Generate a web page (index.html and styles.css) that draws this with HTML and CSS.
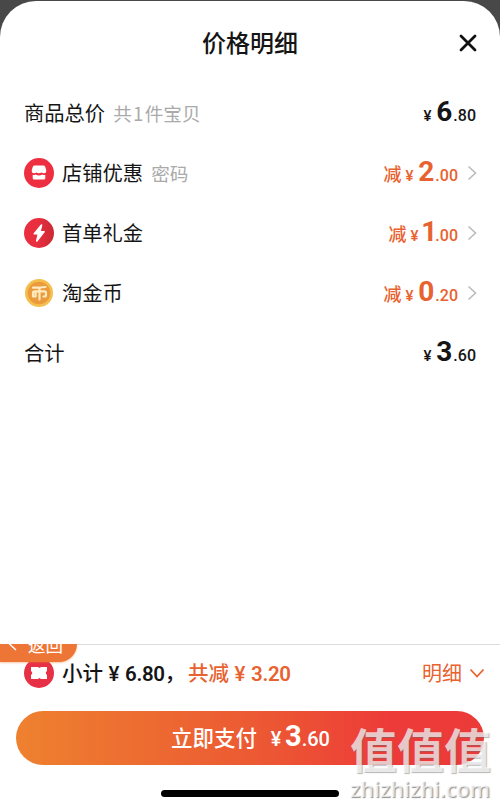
FILE: index.html
```html
<!DOCTYPE html>
<html lang="zh-CN">
  <head>
    <meta charset="UTF-8">
    <title>价格明细</title>
    <link rel="stylesheet" href="styles.css">
  </head>
  <body>
    <div class="sheet">
      <header class="header">
        <h1 class="title">价格明细</h1>
        <svg class="close" viewBox="0 0 18 18"><path d="M2 2l14 14M16 2L2 16"/></svg>
      </header>

      <main class="list">
        <div class="row">
          <span class="label">商品总价</span>
          <span class="note">共<span class="count">1</span>件宝贝</span>
          <span class="price"><span class="yen">¥</span><b>6</b><span class="dec">.80</span></span>
        </div>

        <div class="row">
          <svg class="icon" viewBox="0 0 30 30">
            <circle cx="15" cy="15" r="15" fill="#ee2f41"/>
            <path d="M10.500 7.500h9q1.200 0 1.700 1.200l1 3.300q.400 3.200-2.200 3.200-1.200 0-2.500-.700-1.300.800-2.500.800t-2.500-.800q-1.300.700-2.500.700-2.600 0-2.200-3.200l1-3.300q.500-1.200 1.700-1.200z" fill="#fff"/>
            <path d="M8.700 17q1.500.400 3-.500 1.700 1 3.300 1t3.300-1q1.500.900 3 .500v3q0 1.600-1.500 1.600h-9.600q-1.500 0-1.500-1.600z" fill="#fff"/>
          </svg>
          <span class="label">店铺优惠</span>
          <span class="note">密码</span>
          <span class="price off"><span class="cut">减</span><span class="yen">¥</span><b>2</b><span class="dec">.00</span></span>
          <svg class="arrow" viewBox="0 0 10 16"><path d="M1.500 1.500L8.500 8l-7 6.500"/></svg>
        </div>

        <div class="row">
          <svg class="icon" viewBox="0 0 30 30">
            <defs>
              <linearGradient id="red" x1="0" y1="0" x2="1" y2="0">
                <stop offset="0.450" stop-color="#e92e40"/>
                <stop offset="1" stop-color="#c92a34"/>
              </linearGradient>
            </defs>
            <circle cx="15" cy="15" r="15" fill="url(#red)"/>
            <path d="M17.500 7L10.300 15.800h4L12.800 23 20 13.700h-4z" fill="#fff" stroke="#fff" stroke-width="1.600" stroke-linejoin="round"/>
          </svg>
          <span class="label">首单礼金</span>
          <span class="price off"><span class="cut">减</span><span class="yen">¥</span><b class="one">1</b><span class="dec">.00</span></span>
          <svg class="arrow" viewBox="0 0 10 16"><path d="M1.500 1.500L8.500 8l-7 6.500"/></svg>
        </div>

        <div class="row">
          <svg class="icon" viewBox="0 0 30 30">
            <circle cx="15" cy="15" r="14" fill="#f3bf4f"/>
            <circle cx="15" cy="15" r="11.300" fill="#eb9b3b"/>
            <path d="M9 9.700q6.500.100 12.500-.700M15.500 9.500V21.500M10.800 18.500H9V15q0-1.700 1.700-1.700h9.600q1.700 0 1.700 1.700v2q0 1.500-1.500 1.500h-1M11.600 13.300v5.200" fill="none" stroke="#fdeac0" stroke-width="2.200" stroke-linejoin="round" stroke-linecap="round"/>
          </svg>
          <span class="label">淘金币</span>
          <span class="price off"><span class="cut">减</span><span class="yen">¥</span><b>0</b><span class="dec">.20</span></span>
          <svg class="arrow" viewBox="0 0 10 16"><path d="M1.500 1.500L8.500 8l-7 6.500"/></svg>
        </div>

        <div class="row">
          <span class="label">合计</span>
          <span class="price"><span class="yen">¥</span><b>3</b><span class="dec">.60</span></span>
        </div>
      </main>

      <footer class="footer">
        <div class="back">
          <svg class="back-arrow" viewBox="0 0 9 14"><path d="M8 1L1.500 7 8 13"/></svg>
          <span>返回</span>
        </div>

        <div class="summary">
          <svg class="icon" viewBox="0 0 30 30">
            <circle cx="15" cy="15" r="15" fill="#e72f45"/>
            <path d="M7 9h7l1.500 1L17 9h6v4q-2.500 2 0 4v4h-6l-1.500-1L14 21H7v-4q2.500-2 0-4z" fill="#fff"/>
          </svg>
          <span class="subtotal">小计<span class="sum-yen">¥</span><span class="num">6.80</span>，</span>
          <span class="saved">共减<span class="sum-yen">¥</span><span class="num">3.20</span></span>
          <span class="detail">明细</span>
          <svg class="down" viewBox="0 0 16 10"><path d="M1.500 1.500L8 8.500l6.500-7"/></svg>
        </div>

        <button type="button" class="pay"><span>立即支付</span><span class="pay-yen">¥</span><b>3</b><span class="pay-dec">.60</span></button>
        <div class="home-bar"></div>
      </footer>
    </div>

    <div class="watermark">
      <div class="mark-name">值值值</div>
      <div class="mark-url">zhizhizhi.com</div>
    </div>
  </body>
</html>
```
FILE: styles.css
```css
* {
  box-sizing: border-box;
}

body {
  margin: 0;
  padding-top: 1px;
  height: 807px;
  overflow: hidden;
  position: relative;
  background: #484848;
  color: #151515;
  font-family: "Noto Sans CJK SC", sans-serif;
}

.sheet {
  display: flex;
  flex-direction: column;
  height: 806px;
  background: #fff;
  border-radius: 36px 36px 0 0;
}

.header {
  display: grid;
  grid-template-columns: 1fr auto 1fr;
  align-items: center;
  height: 82px;
  padding: 0 23px;
}

.title {
  grid-column: 2;
  margin: 0;
  font-size: 24px;
  font-weight: 500;
  line-height: 36px;
}

.close {
  width: 18px;
  height: 18px;
  justify-self: end;
  margin-top: 2px;
  fill: none;
  stroke: #111;
  stroke-width: 2.8;
  stroke-linecap: round;
}

.list {
  flex: 1;
  padding: 0 24px;
}

.row {
  display: flex;
  align-items: center;
  height: 60px;
}

.icon {
  flex: none;
  width: 30px;
  height: 30px;
  margin-right: 8px;
}

.label {
  padding-bottom: 2px;
  font-size: 20.3px;
}

.note {
  margin-left: 8px;
  padding-bottom: 2px;
  font-size: 18.6px;
  font-weight: 400;
  color: #aaa;
}

.count {
  display: inline-block;
  width: 13px;
  text-align: center;
}

.price {
  display: flex;
  align-items: baseline;
  margin-left: auto;
  padding-top: 2px;
  font-family: Roboto, "Noto Sans CJK SC", sans-serif;
  line-height: 32px;
}

.price b {
  width: 17px;
  font-size: 28px;
  font-weight: 700;
}

.yen {
  margin-right: 5px;
  font-size: 15px;
  font-weight: 500;
}

.dec {
  font-size: 16px;
  font-weight: 500;
}

.off {
  color: #e8622f;
}

.cut {
  margin-right: 4px;
  font-size: 18px;
  font-weight: 500;
}

.price .one {
  width: 12px;
  text-indent: -2px;
}

.arrow {
  width: 10px;
  height: 16px;
  margin-left: 9px;
  margin-right: -1px;
  fill: none;
  stroke: #bbb;
  stroke-width: 1.6;
}

.footer {
  position: relative;
  height: 163px;
  border-top: 1px solid #dcdcdc;
}

/* floating tab, cut off by the top of the footer */
.back {
  position: absolute;
  top: -1px;
  left: 0;
  display: flex;
  align-items: flex-start;
  width: 77px;
  height: 18px;
  overflow: hidden;
  background: #ed7535;
  border-radius: 0 0 18px 0;
  box-shadow: 0 1px 2px rgba(237, 117, 53, 0.4);
  color: #fff;
  font-size: 17.5px;
  font-weight: 400;
  line-height: 26px;
}

.back span {
  margin: -12px 0 0 11px;
}

.back-arrow {
  width: 9px;
  height: 14px;
  margin: -7px 0 0 8px;
  fill: none;
  stroke: #fff;
  stroke-width: 1.4;
}

.summary {
  display: flex;
  align-items: center;
  height: 56px;
  padding: 0 15px 0 24px;
  font-size: 20.5px;
  font-weight: 500;
}

.num {
  font-family: Roboto, sans-serif;
  font-size: 20.5px;
  font-weight: 600;
  letter-spacing: -0.3px;
}

.sum-yen {
  display: inline-block;
  width: 22px;
  font-family: Roboto, sans-serif;
  font-weight: 500;
  text-align: center;
}

.subtotal,
.saved,
.detail {
  padding-bottom: 2px;
  white-space: nowrap;
}

.subtotal {
  width: 126px;
}

.saved {
  color: #e8622f;
}

.detail {
  margin-left: auto;
  color: #e8622f;
  font-size: 20px;
  font-weight: 400;
}

.down {
  width: 16px;
  height: 10px;
  margin-left: 7px;
  fill: none;
  stroke: #e8622f;
  stroke-width: 1.8;
}

.pay {
  display: flex;
  align-items: baseline;
  width: 468px;
  height: 54px;
  margin: 10px 16px 0;
  padding: 0 0 3px 155px;
  border: none;
  border-radius: 27px;
  background: linear-gradient(90deg, #ee812f, #ec5633 55%, #ed3b39 80%, #eb3b38);
  color: #fff;
  font-family: "Noto Sans CJK SC", sans-serif;
  font-size: 21.5px;
  font-weight: 500;
  line-height: 51px;
}

.pay b {
  font-family: Roboto, sans-serif;
  font-size: 29px;
}

.pay-yen {
  width: 28px;
  padding-left: 10px;
  font-family: Roboto, sans-serif;
  font-size: 20px;
}

.pay-dec {
  font-family: Roboto, sans-serif;
  font-size: 20px;
  font-weight: 500;
}

.home-bar {
  width: 178px;
  height: 7px;
  margin: 25px auto 0;
  border-radius: 4px;
  background: #000;
}

.watermark {
  position: absolute;
  top: 721px;
  left: 350px;
  color: rgba(255, 255, 255, 0.7);
  white-space: nowrap;
}

.mark-name {
  font-size: 47px;
  font-weight: 700;
  line-height: 54px;
  text-shadow: 1px 1px 1px rgba(110, 110, 110, 0.5);
}

.mark-url {
  font-family: "Open Sans", sans-serif;
  font-size: 21.5px;
  font-weight: 600;
  line-height: 28px;
  text-shadow: 1px 1px 1px rgba(100, 100, 100, 0.7);
}
```
